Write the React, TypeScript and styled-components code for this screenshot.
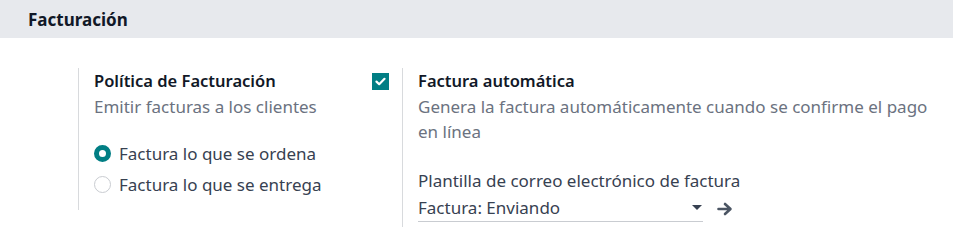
import styled, { createGlobalStyle } from "styled-components";

const GlobalStyle = createGlobalStyle`
  body {
    margin: 0;
    background: #ffffff;
    font-family: "Noto Sans", "Open Sans", sans-serif;
    color: #374151;
  }
`;

//#region CSS styles
const SectionHeader = styled.h2`
  margin: 0;
  height: 38px;
  padding-left: 28px;
  display: flex;
  align-items: center;
  background: #e7e9ed;
  color: #111827;
  font-size: 17px;
  font-weight: 700;
`;

const SettingsGrid = styled.div`
  display: grid;
  grid-template-columns: 324px 1fr;
  align-items: start;
  padding: 30px 24px 0 44px;
`;

const SettingBox = styled.div`
  display: flex;
`;

const LeftPane = styled.div`
  width: 30px;
  flex-shrink: 0;
  padding: 5px 0 0 4px;
  display: flex;
  align-items: flex-start;
`;

const RightPane = styled.div<{ $bottom: number }>`
  border-left: 1px solid #d8dadd;
  padding: 0 0 ${(p) => p.$bottom}px 15px;
  flex: 1;
  line-height: 25px;
  font-size: 17px;
`;

const Title = styled.div`
  color: #111827;
  font-weight: 600;
  font-size: 16.5px;
  line-height: 26px;
`;

const Description = styled.div`
  color: #6b7280;
`;

const RadioList = styled.div`
  margin-top: 22px;
  display: flex;
  flex-direction: column;
  gap: 6px;
`;

const RadioRow = styled.label`
  display: flex;
  align-items: center;
  gap: 8px;
  color: #374151;
`;

const RadioDot = styled.span<{ $checked?: boolean }>`
  width: 17px;
  height: 17px;
  box-sizing: border-box;
  border-radius: 50%;
  border: ${(p) => (p.$checked ? "5px solid #017e84" : "1px solid #c9ccd1")};
  background: #ffffff;
`;

const CheckBox = styled.span`
  width: 17px;
  height: 17px;
  background: #017e84;
  display: flex;
  align-items: center;
  justify-content: center;
`;

const FieldLabel = styled.div`
  margin-top: 24px;
  color: #374151;
`;

const FieldRow = styled.div`
  display: flex;
  align-items: center;
  gap: 14px;
  margin-top: 2px;
`;

const SelectBox = styled.div`
  width: 285px;
  display: flex;
  align-items: center;
  justify-content: space-between;
  border-bottom: 1px solid #c9ccd1;
  padding-bottom: 1px;
  color: #374151;
`;

const Caret = styled.span`
  width: 0;
  height: 0;
  margin-right: 1px;
  border-left: 5px solid transparent;
  border-right: 5px solid transparent;
  border-top: 5px solid #374151;
`;
//#endregion

function CheckMark() {
  return (
    <svg width="11" height="9" viewBox="0 0 11 9">
      <path
        d="M1.5 4.6 L4.2 7.2 L9.5 1.8"
        fill="none"
        stroke="#ffffff"
        strokeWidth="2.2"
        strokeLinecap="round"
        strokeLinejoin="round"
      />
    </svg>
  );
}

function ArrowRight() {
  return (
    <svg width="16" height="14" viewBox="0 0 16 14">
      <path
        d="M1.5 7 H13 M8 2 L13.5 7 L8 12"
        fill="none"
        stroke="#4b5563"
        strokeWidth="2.6"
        strokeLinecap="round"
        strokeLinejoin="round"
      />
    </svg>
  );
}

export default function App() {
  return (
    <>
      <GlobalStyle />
      <SectionHeader>Facturación</SectionHeader>
      <SettingsGrid>
        <SettingBox>
          <LeftPane />
          <RightPane $bottom={13}>
            <Title>Política de Facturación</Title>
            <Description>Emitir facturas a los clientes</Description>
            <RadioList>
              <RadioRow>
                <RadioDot $checked />
                Factura lo que se ordena
              </RadioRow>
              <RadioRow>
                <RadioDot />
                Factura lo que se entrega
              </RadioRow>
            </RadioList>
          </RightPane>
        </SettingBox>
        <SettingBox>
          <LeftPane>
            <CheckBox>
              <CheckMark />
            </CheckBox>
          </LeftPane>
          <RightPane $bottom={5}>
            <Title>Factura automática</Title>
            <Description>
              Genera la factura automáticamente cuando se confirme el pago en
              línea
            </Description>
            <FieldLabel>Plantilla de correo electrónico de factura</FieldLabel>
            <FieldRow>
              <SelectBox>
                Factura: Enviando
                <Caret />
              </SelectBox>
              <ArrowRight />
            </FieldRow>
          </RightPane>
        </SettingBox>
      </SettingsGrid>
    </>
  );
}
